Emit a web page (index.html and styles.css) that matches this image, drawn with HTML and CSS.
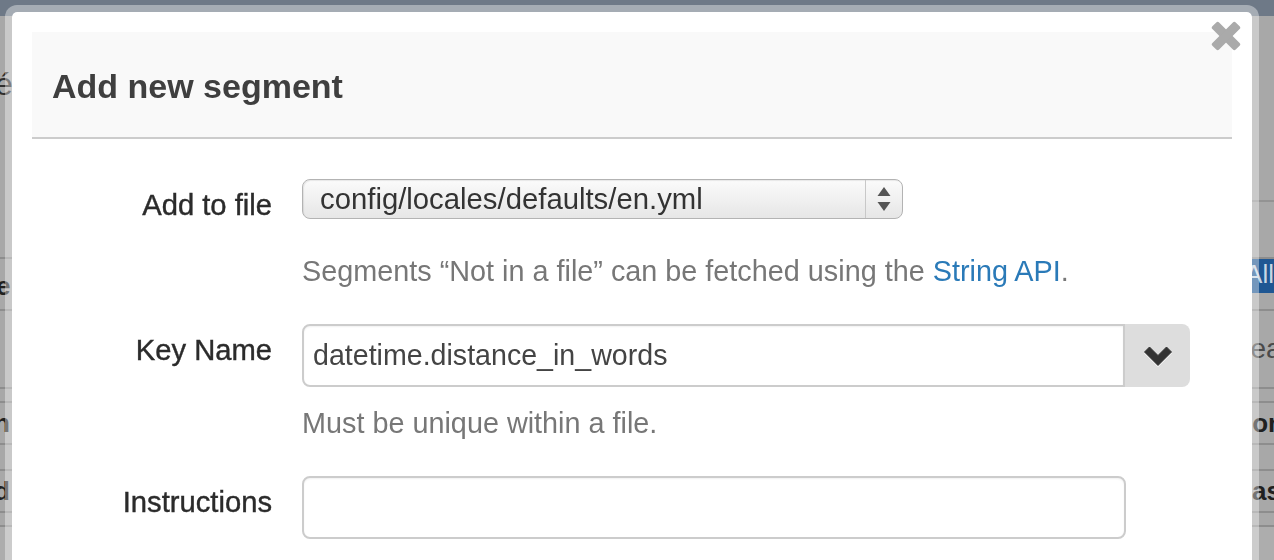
FILE: index.html
```html
<!DOCTYPE html>
<html lang="en">

<head>
    <meta charset="UTF-8">
    <meta name="viewport" content="width=device-width, initial-scale=1.0">
    <title>Add new segment</title>
    <link rel="stylesheet" href="styles.css">
</head>

<body>
    <div class="page">
        <div class="navbar"></div>
        <div class="page-head">
            <h1 class="page-title">é</h1>
            <div class="toolbar-line"></div>
        </div>
        <div class="row row-head">
            <b class="cell-left">e</b>
            <span class="btn-all">All</span>
        </div>
        <div class="row row-tall">
            <span></span>
            <span class="cell-right muted">Clear</span>
        </div>
        <div class="row row-thin"></div>
        <div class="row row-mid">
            <b class="cell-left">n</b>
            <b class="cell-right">on</b>
        </div>
        <div class="row row-gap"></div>
        <div class="row row-mid">
            <b class="cell-left">d</b>
            <b class="cell-right cell-as">as</b>
        </div>
        <div class="row row-thin"></div>
    </div>

    <div class="modal">
        <button class="close" type="button" aria-label="Close">
            <svg width="30" height="30" viewBox="0 0 30 30">
                <rect x="-1.5" y="10.25" width="33" height="9.5" rx="2" transform="rotate(45 15 15)" />
                <rect x="-1.5" y="10.25" width="33" height="9.5" rx="2" transform="rotate(-45 15 15)" />
            </svg>
        </button>
        <div class="modal-header">
            <h3>Add new segment</h3>
        </div>
        <form class="modal-body">
            <div class="control-group">
                <label class="control-label">Add to file</label>
                <div class="controls">
                    <div class="select">
                        <span class="select-value">config/locales/defaults/en.yml</span>
                        <span class="select-arrows">
                            <svg width="14" height="26" viewBox="0 0 14 26">
                                <path d="M7 1 L13.5 10 L0.5 10 Z" />
                                <path d="M0.5 16 L13.5 16 L7 25 Z" />
                            </svg>
                        </span>
                    </div>
                    <p class="help-block">Segments “Not in a file” can be fetched using the <a href="#">String API</a>.</p>
                </div>
            </div>
            <div class="control-group">
                <label class="control-label">Key Name</label>
                <div class="controls">
                    <div class="input-append">
                        <input type="text" value="datetime.distance_in_words">
                        <span class="add-on">
                            <svg width="30" height="22" viewBox="0 0 30 22">
                                <path d="M1.5 7 L6.5 2 L15 10.5 L23.5 2 L28.5 7 L15 20.5 Z" />
                            </svg>
                        </span>
                    </div>
                    <p class="help-block">Must be unique within a file.</p>
                </div>
            </div>
            <div class="control-group">
                <label class="control-label">Instructions</label>
                <div class="controls">
                    <input class="input-wide" type="text">
                </div>
            </div>
        </form>
    </div>
</body>

</html>
```

FILE: styles.css
```css
* {
    margin: 0;
    padding: 0;
    box-sizing: border-box;
}

body {
    width: 1274px;
    height: 560px;
    overflow: hidden;
    font-family: "Liberation Sans", Arial, sans-serif;
    background-color: #adadad;
}

.navbar {
    height: 16px;
    background-color: #6e7987;
}

.page-head {
    height: 241px;
    display: flex;
    flex-direction: column;
    background-color: #a8a8a8;
}

.page-title {
    margin-top: 48px;
    margin-left: -5px;
    font-size: 32px;
    line-height: 40px;
    font-weight: normal;
    color: #2e2e2e;
}

.toolbar-line {
    margin-top: 96px;
    margin-left: auto;
    width: 40px;
    border-bottom: 2px solid #939393;
}

.row {
    display: flex;
    justify-content: space-between;
    align-items: center;
    background-color: #a8a8a8;
    border-bottom: 2px solid #8d8d8d;
    font-size: 26px;
    color: #202020;
    overflow: hidden;
}

.row-head {
    height: 54px;
    border-top: 2px solid #8d8d8d;
    align-items: flex-start;
}

.row-head .cell-left {
    margin-top: 12px;
    margin-left: -4px;
}

.row-tall {
    height: 78px;
}

.row-thin {
    height: 14px;
}

.row-mid {
    height: 42px;
}

.row-gap {
    height: 26px;
}

.cell-left {
    margin-left: -6px;
}

.cell-right {
    margin-right: -10px;
}

.cell-as {
    margin-right: -7px;
}

.muted {
    color: #4a4a4a;
    font-size: 28px;
    font-weight: normal;
    margin-right: -17px;
}

.btn-all {
    height: 37px;
    padding: 0 24px 0 10px;
    margin-top: -3px;
    margin-right: -24px;
    line-height: 37px;
    color: #c9d6e4;
    background-color: #1f5793;
    font-size: 26px;
}

/* modal */
.modal {
    position: fixed;
    top: 5px;
    left: 5px;
    width: 1254px;
    height: 620px;
    padding: 20px;
    background-color: #fff;
    background-clip: padding-box;
    border: 7px solid rgba(255, 255, 255, 0.38);
    border-radius: 12px;
}

.close {
    position: absolute;
    top: 9px;
    right: 11px;
    width: 30px;
    height: 30px;
    border: 0;
    background: none;
    cursor: pointer;
}

.close svg {
    display: block;
    fill: #aaa;
}

.modal-header {
    padding: 34px 20px 31px;
    background-color: #f9f9f9;
    border-bottom: 2px solid #ccc;
}

.modal-header h3 {
    font-size: 34px;
    line-height: 40px;
    font-weight: bold;
    color: #3f3f3f;
}

.modal-body {
    padding-top: 40px;
}

.control-group {
    display: flex;
    margin-bottom: 33px;
}

.control-label {
    flex-shrink: 0;
    width: 240px;
    margin-right: 30px;
    padding-top: 6px;
    line-height: 40px;
    font-size: 29.2px;
    text-align: right;
    color: #2b2b2b;
    -webkit-text-stroke: 0.4px #2b2b2b;
}

.controls {
    flex: 1;
}

.select {
    display: flex;
    width: 601px;
    height: 40px;
    margin-bottom: 32px;
    border: 1px solid #b3b3b3;
    border-radius: 8px;
    background: linear-gradient(#fbfbfb, #e6e6e6);
    box-shadow: inset 1px 1px 1px rgba(0, 0, 0, 0.08);
}

.select-value {
    flex: 1;
    padding-left: 17px;
    line-height: 38px;
    font-size: 29.3px;
    color: #333;
}

.select-arrows {
    width: 37px;
    display: flex;
    align-items: center;
    justify-content: center;
    border-left: 1px solid #c8c8c8;
}

.select-arrows svg {
    fill: #555;
}

.help-block {
    margin-top: 16px;
    line-height: 40px;
    font-size: 28.8px;
    color: #777;
}

.help-block a {
    color: #2a7ab8;
    text-decoration: none;
}

.input-append {
    display: flex;
    width: 888px;
    height: 63px;
}

input {
    height: 63px;
    padding: 0 9px;
    font-family: inherit;
    font-size: 28.6px;
    color: #444;
    border: 2px solid #ccc;
    outline: none;
    box-shadow: inset 0 1px 2px rgba(0, 0, 0, 0.06);
}

.input-append input {
    flex: 1;
    border-radius: 8px 0 0 8px;
}

.add-on {
    width: 65px;
    display: flex;
    align-items: center;
    justify-content: center;
    background-color: #ddd;
    border-radius: 0 8px 8px 0;
}

.add-on svg {
    fill: #333;
    stroke: #333;
    stroke-width: 1;
    stroke-linejoin: round;
    filter: drop-shadow(0 1px 0 #fff);
}

.input-wide {
    display: block;
    width: 824px;
    border-radius: 8px;
}
```
